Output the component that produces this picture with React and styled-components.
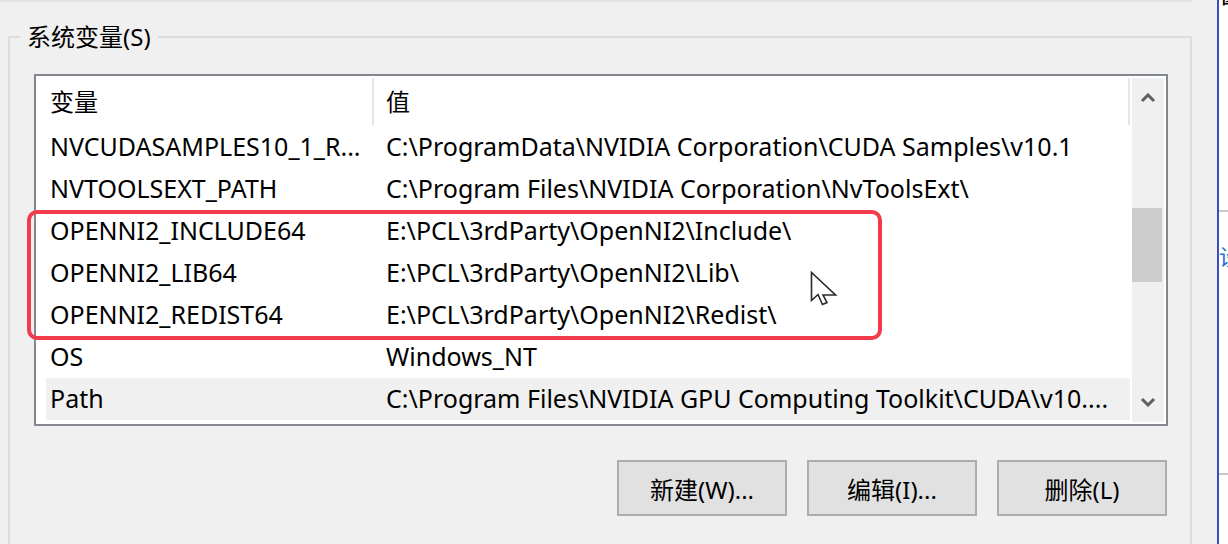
import React from 'react';
import styled, { createGlobalStyle } from 'styled-components';

const rows = [
  { name: 'NVCUDASAMPLES10_1_R...', value: 'C:\\ProgramData\\NVIDIA Corporation\\CUDA Samples\\v10.1' },
  { name: 'NVTOOLSEXT_PATH', value: 'C:\\Program Files\\NVIDIA Corporation\\NvToolsExt\\' },
  { name: 'OPENNI2_INCLUDE64', value: 'E:\\PCL\\3rdParty\\OpenNI2\\Include\\' },
  { name: 'OPENNI2_LIB64', value: 'E:\\PCL\\3rdParty\\OpenNI2\\Lib\\' },
  { name: 'OPENNI2_REDIST64', value: 'E:\\PCL\\3rdParty\\OpenNI2\\Redist\\' },
  { name: 'OS', value: 'Windows_NT' },
  { name: 'Path', value: 'C:\\Program Files\\NVIDIA GPU Computing Toolkit\\CUDA\\v10....', selected: true },
];

const Chevron = ({ down }) => (
  <svg width="16" height="10" viewBox="0 0 16 10">
    <polyline
      points={down ? '2,2 8,8 14,2' : '2,8 8,2 14,8'}
      fill="none"
      stroke="#606060"
      strokeWidth="3"
    />
  </svg>
);

const App = () => {
  return (
    <>
      <GlobalStyle />
      <Screen>
        <Main>
          <TopRule />
          <Group>
            <Legend>系统变量(S)</Legend>
            <ListBox>
              <TableArea>
                <HeaderRow>
                  <HeaderCell>变量</HeaderCell>
                  <HeaderCell>值</HeaderCell>
                </HeaderRow>
                {rows.map(r => (
                  <Row key={r.name} $selected={r.selected}>
                    <Cell>{r.name}</Cell>
                    <Cell>{r.value}</Cell>
                  </Row>
                ))}
              </TableArea>
              <Scrollbar>
                <ScrollButton><Chevron /></ScrollButton>
                <Track><Thumb /></Track>
                <ScrollButton><Chevron down /></ScrollButton>
              </Scrollbar>
              <Highlight />
              <Cursor width="30" height="38" viewBox="-1.5 -1.5 30 38">
                <path
                  d="M0 0 V28 L6.5 22 L11 32 L15.5 30 L11.5 22.5 H24 Z"
                  fill="#fff"
                  stroke="#2a2a2a"
                  strokeWidth="1.6"
                  strokeLinejoin="miter"
                />
              </Cursor>
            </ListBox>
            <ButtonRow>
              <Button>新建(W)...</Button>
              <Button>编辑(I)...</Button>
              <Button>删除(L)</Button>
            </ButtonRow>
          </Group>
        </Main>
        <Divider />
        <Side>
          <TopClip><span>窗口</span></TopClip>
          <SideRule $gap={201} />
          <BlueClip><span>设置</span></BlueClip>
          <SideRule $gap={206} />
        </Side>
      </Screen>
    </>
  );
};

export default App;

const GlobalStyle = createGlobalStyle`
  html, body {
    margin: 0;
    padding: 0;
  }
  body {
    width: 1228px;
    height: 544px;
    overflow: hidden;
    background: #f0f0f0;
    font-family: "Noto Sans", "Noto Sans CJK SC", sans-serif;
    color: #000;
  }
`;

const Screen = styled.div`
  display: flex;
  width: 1228px;
  height: 544px;
  overflow: hidden;
`;

const Main = styled.div`
  flex: none;
  width: 1217px;
  background: #f0f0f0;
`;

const TopRule = styled.div`
  width: 1192px;
  height: 2px;
  background: #e3e3e3;
`;

const Group = styled.fieldset`
  margin: 20px 0 0 8px;
  width: 1184px;
  min-width: 0;
  box-sizing: border-box;
  border: 2px solid #dcdcdc;
  padding: 22px 0 60px 0;
`;

const Legend = styled.legend`
  margin-left: 10px;
  padding: 0 7px;
  font-size: 24px;
  line-height: 30px;
`;

const ListBox = styled.div`
  position: relative;
  display: flex;
  margin-left: 24px;
  width: 1134px;
  height: 352px;
  box-sizing: border-box;
  border: 2px solid #828790;
  padding: 2px;
  background: #fff;
`;

const TableArea = styled.div`
  flex: 1;
  display: flex;
  flex-direction: column;
  font-size: 25px;
`;

const HeaderRow = styled.div`
  display: grid;
  grid-template-columns: 336px 756px;
  height: 48px;
  font-size: 24px;
`;

const HeaderCell = styled.div`
  display: flex;
  align-items: center;
  padding: 0 0 3px 12px;
  border-right: 2px solid #e5e5e5;
  margin-bottom: 1px;
`;

const Row = styled.div`
  display: grid;
  grid-template-columns: 336px 1fr;
  align-items: center;
  height: 42px;
  width: 1084px;
  margin-left: 8px;
  background: ${p => (p.$selected ? '#f0f0f0' : 'transparent')};
`;

const Cell = styled.div`
  padding: 0 0 2px 4px;
  white-space: nowrap;
  overflow: hidden;
`;

const Scrollbar = styled.div`
  flex: none;
  width: 32px;
  display: flex;
  flex-direction: column;
  background: #f0f0f0;
`;

const ScrollButton = styled.div`
  height: 40px;
  display: flex;
  align-items: center;
  justify-content: center;
`;

const Track = styled.div`
  flex: 1;
`;

const Thumb = styled.div`
  margin-top: 90px;
  width: 30px;
  height: 74px;
  background: #cdcdcd;
`;

const Highlight = styled.div`
  position: absolute;
  left: -9px;
  top: 134px;
  width: 855px;
  height: 130px;
  box-sizing: border-box;
  border: 4px solid #f23b4b;
  border-radius: 10px;
  pointer-events: none;
`;

const Cursor = styled.svg`
  position: absolute;
  left: 773.5px;
  top: 194.5px;
`;

const ButtonRow = styled.div`
  display: flex;
  justify-content: flex-end;
  gap: 20px;
  margin: 34px 23px 0 0;
`;

const Button = styled.button`
  width: 170px;
  height: 56px;
  box-sizing: border-box;
  padding: 0;
  border: 2px solid #adadad;
  background: #e1e1e1;
  font-family: inherit;
  font-size: 24px;
  color: #000;
`;

const Divider = styled.div`
  flex: none;
  width: 2px;
  background: #3b4dc4;
`;

const Side = styled.div`
  flex: 1;
  display: flex;
  flex-direction: column;
  overflow: hidden;
  background: #fff;
`;

const TopClip = styled.div`
  height: 9px;
  overflow: hidden;
  font-size: 24px;
  line-height: 30px;

  span {
    display: block;
    margin-top: -21px;
    white-space: nowrap;
  }
`;

const SideRule = styled.div`
  flex: none;
  height: 2px;
  margin-top: ${p => p.$gap}px;
  background: #c8c8c8;
`;

const BlueClip = styled.div`
  margin-top: 34px;
  height: 21px;
  overflow: hidden;
  color: #1a6fd8;
  font-size: 22px;
  line-height: 21px;
  white-space: nowrap;
`;
